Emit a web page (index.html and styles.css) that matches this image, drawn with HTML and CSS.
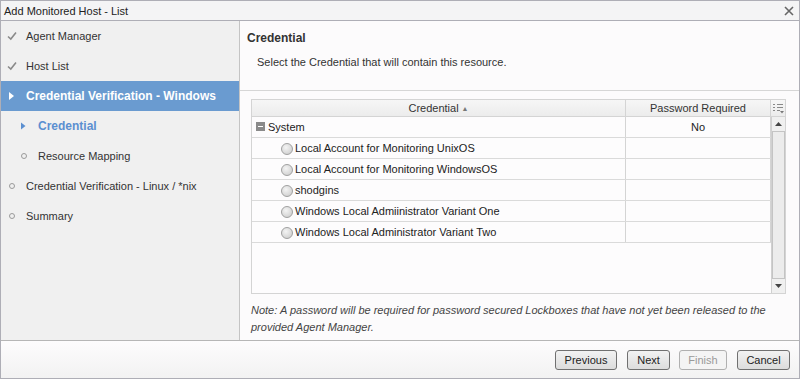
FILE: index.html
```html
<!DOCTYPE html>
<html lang="en">
<head>
    <meta charset="UTF-8">
    <title>Add Monitored Host - List</title>
    <link rel="stylesheet" href="styles.css">
</head>
<body>
    <div class="window">
        <div class="titlebar">
            <span class="title">Add Monitored Host - List</span>
            <svg class="close" width="10" height="10" viewBox="0 0 10 10"><path d="M1 1L9 9M9 1L1 9" stroke="#666" stroke-width="1.6"/></svg>
        </div>

        <div class="main">
            <div class="nav">
                <div class="nav-item">
                    <svg class="ico" width="10" height="10" viewBox="0 0 10 10"><path d="M1 5.5L3.8 8L9 1.5" fill="none" stroke="#8a8a8a" stroke-width="1.6"/></svg>
                    <span>Agent Manager</span>
                </div>
                <div class="nav-item">
                    <svg class="ico" width="10" height="10" viewBox="0 0 10 10"><path d="M1 5.5L3.8 8L9 1.5" fill="none" stroke="#8a8a8a" stroke-width="1.6"/></svg>
                    <span>Host List</span>
                </div>
                <div class="nav-item selected">
                    <svg class="ico" width="10" height="10" viewBox="0 0 10 10"><path d="M2 1L7 5L2 9Z" fill="#fff"/></svg>
                    <span>Credential Verification - Windows</span>
                </div>
                <div class="nav-item sub current">
                    <svg class="ico" width="10" height="10" viewBox="0 0 10 10"><path d="M2 1.5L6.5 5L2 8.5Z" fill="#5b8fd0"/></svg>
                    <span>Credential</span>
                </div>
                <div class="nav-item sub">
                    <span class="dot"></span>
                    <span>Resource Mapping</span>
                </div>
                <div class="nav-item">
                    <span class="dot"></span>
                    <span>Credential Verification - Linux / *nix</span>
                </div>
                <div class="nav-item">
                    <span class="dot"></span>
                    <span>Summary</span>
                </div>
            </div>

            <div class="content">
                <div class="content-head">
                    <div class="heading">Credential</div>
                    <div class="desc">Select the Credential that will contain this resource.</div>
                </div>
                <div class="content-body">
                    <div class="grid">
                        <div class="grid-head">
                            <div class="hcell col-cred">Credential <span class="sort">&#9650;</span></div>
                            <div class="hcell col-pw">Password Required</div>
                            <div class="hcell col-opt">
                                <svg width="11" height="11" viewBox="0 0 11 11">
                                    <path d="M0 1.5h2M4 1.5h6M0 4.5h2M4 4.5h6M0 7.5h2M4 7.5h3" stroke="#888" stroke-width="1"/>
                                    <path d="M7 8h4l-2 2.5z" fill="#777"/>
                                </svg>
                            </div>
                        </div>
                        <div class="grid-body">
                            <div class="rows">
                                <div class="row">
                                    <div class="cell col-cred group"><span class="minus"></span>System</div>
                                    <div class="cell col-pw center">No</div>
                                </div>
                                <div class="row">
                                    <div class="cell col-cred item"><span class="radio"></span>Local Account for Monitoring UnixOS</div>
                                    <div class="cell col-pw"></div>
                                </div>
                                <div class="row">
                                    <div class="cell col-cred item"><span class="radio"></span>Local Account for Monitoring WindowsOS</div>
                                    <div class="cell col-pw"></div>
                                </div>
                                <div class="row">
                                    <div class="cell col-cred item"><span class="radio"></span>shodgins</div>
                                    <div class="cell col-pw"></div>
                                </div>
                                <div class="row">
                                    <div class="cell col-cred item"><span class="radio"></span>Windows Local Admiinistrator Variant One</div>
                                    <div class="cell col-pw"></div>
                                </div>
                                <div class="row">
                                    <div class="cell col-cred item"><span class="radio"></span>Windows Local Administrator Variant Two</div>
                                    <div class="cell col-pw"></div>
                                </div>
                            </div>
                            <div class="scroll">
                                <div class="sbtn"><svg width="7" height="4" viewBox="0 0 7 4"><path d="M0 4L3.5 0L7 4Z" fill="#444"/></svg></div>
                                <div class="thumb"></div>
                                <div class="sbtn"><svg width="7" height="4" viewBox="0 0 7 4"><path d="M0 0L3.5 4L7 0Z" fill="#444"/></svg></div>
                            </div>
                        </div>
                    </div>
                    <p class="note">Note: A password will be required for password secured Lockboxes that have not yet been released to the provided Agent Manager.</p>
                </div>
            </div>
        </div>

        <div class="footer">
            <button class="btn prev">Previous</button>
            <button class="btn next">Next</button>
            <button class="btn finish" disabled>Finish</button>
            <button class="btn cancel">Cancel</button>
        </div>
    </div>
</body>
</html>
```

FILE: styles.css
```css
* {
    box-sizing: border-box;
}
body {
    margin: 0;
    font-family: "Liberation Sans", Arial, sans-serif;
    font-size: 11px;
    color: #222;
}
.window {
    width: 800px;
    height: 379px;
    border: 1px solid #aeaeb6;
    display: flex;
    flex-direction: column;
    background: #fcfbfc;
}
.titlebar {
    height: 20px;
    border-bottom: 1px solid #aeaeb6;
    background: #f4f4f5;
    display: flex;
    align-items: center;
    justify-content: space-between;
    padding: 0 5px 0 3px;
}
.title {
    font-size: 11px;
    color: #222;
}
.main {
    display: flex;
    height: 319px;
}
.nav {
    width: 239px;
    background: #f0f0f0;
    border-right: 1px solid #c4c4c4;
}
.nav-item {
    height: 30px;
    display: flex;
    align-items: center;
    padding-left: 6px;
    color: #333;
}
.nav-item .ico {
    width: 10px;
    margin-right: 9px;
}
.nav-item .dot {
    width: 6px;
    height: 6px;
    border: 1px solid #9a9a9a;
    border-radius: 50%;
    margin: 0 11px 0 2px;
}
.nav-item.sub {
    padding-left: 18px;
}
.selected {
    background: #6a9bd0;
    color: #fff;
    font-weight: bold;
    font-size: 12px;
}
.current {
    color: #5b8fd0;
    font-weight: bold;
    font-size: 12px;
}
.content {
    flex: 1;
    display: flex;
    flex-direction: column;
}
.content-head {
    height: 70px;
    flex: none;
    border-bottom: 1px solid #d6d6d6;
    padding-left: 7px;
}
.heading {
    font-weight: bold;
    font-size: 12px;
    margin-top: 10px;
    color: #333;
}
.desc {
    margin-top: 11px;
    padding-left: 10px;
    color: #333;
}
.content-body {
    padding: 8px 13px 0 11px;
}
.grid {
    border: 1px solid #d4d4d4;
    height: 195px;
    display: flex;
    flex-direction: column;
    background: #fdfcfd;
}
.grid-head {
    display: flex;
    flex: none;
    height: 17px;
    border-bottom: 1px solid #d4d4d4;
    background: linear-gradient(#f6f6f6, #ececec);
}
.hcell {
    display: flex;
    align-items: center;
    justify-content: center;
    color: #333;
}
.col-cred {
    width: 374px;
    border-right: 1px solid #d4d4d4;
}
.col-pw {
    width: 145px;
    border-right: 1px solid #d4d4d4;
}
.col-opt {
    flex: 1;
}
.sort {
    font-size: 7px;
    color: #777;
    margin-left: 3px;
}
.grid-body {
    flex: 1;
    display: flex;
}
.rows {
    width: 519px;
}
.row {
    display: flex;
    height: 21px;
    border-bottom: 1px solid #dadada;
}
.cell {
    display: flex;
    align-items: center;
    padding-bottom: 1px;
}
.cell.center {
    justify-content: center;
}
.group {
    padding-left: 4px;
}
.minus {
    width: 9px;
    height: 9px;
    background: #8a8a8a;
    margin-right: 3px;
    position: relative;
}
.minus::after {
    content: "";
    position: absolute;
    left: 2px;
    top: 4px;
    width: 5px;
    height: 1px;
    background: #fff;
}
.item {
    padding-left: 29px;
}
.radio {
    width: 12px;
    height: 12px;
    border: 1px solid #a0a0a0;
    border-radius: 50%;
    background: radial-gradient(circle at 40% 35%, #f4f4f4, #c8c8c8);
    margin-right: 2px;
    margin-top: 3px;
}
.scroll {
    width: 14px;
    border-left: 1px solid #d0d0d0;
    display: flex;
    flex-direction: column;
}
.sbtn {
    height: 14px;
    flex: none;
    display: flex;
    align-items: center;
    justify-content: center;
    background: #f0f0f0;
}
.thumb {
    flex: 1;
    border: 1px solid #c4c4c4;
    background: #ececec;
}
.note {
    font-style: italic;
    color: #444;
    margin: 8px 0 0;
    line-height: 17px;
}
.footer {
    flex: 1;
    border-top: 1px solid #b6b6b6;
    background: linear-gradient(#fdfcfd, #f2f2f2);
    display: flex;
    align-items: center;
    justify-content: flex-end;
    padding-right: 9px;
}
.btn {
    font-family: "Liberation Sans", Arial, sans-serif;
    font-size: 11px;
    height: 20px;
    padding: 0;
    margin-left: 10px;
    border: 1px solid #707070;
    border-radius: 3px;
    background: linear-gradient(#f2f2f2, #dcdcdc);
    color: #222;
}
.prev {
    width: 62px;
}
.next {
    width: 43px;
}
.finish {
    width: 48px;
    margin-left: 9px;
}
.cancel {
    width: 53px;
}
.btn:disabled {
    color: #999;
    border-color: #b0b0b0;
    background: #f4f4f4;
}
```
